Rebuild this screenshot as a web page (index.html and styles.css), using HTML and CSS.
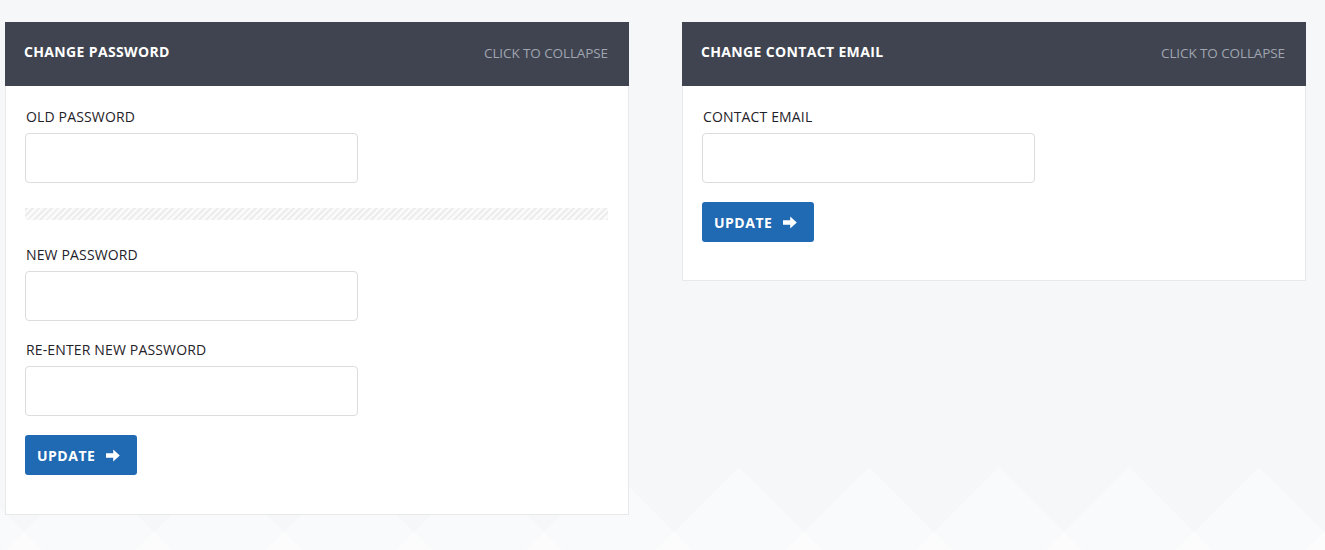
FILE: index.html
```html
<!DOCTYPE html>
<html>
<head>
<meta charset="utf-8">
<link rel="stylesheet" href="styles.css">
</head>
<body>
<div class="page">
  <section class="panel">
    <header class="panel-head">
      <h2 class="panel-title">CHANGE PASSWORD</h2>
      <span class="collapse">CLICK TO COLLAPSE</span>
    </header>
    <div class="panel-body">
      <div class="field">
        <label class="label">OLD PASSWORD</label>
        <input class="input" type="password">
      </div>
      <div class="separator"></div>
      <div class="field field-new">
        <label class="label">NEW PASSWORD</label>
        <input class="input" type="password">
      </div>
      <div class="field field-re">
        <label class="label">RE-ENTER NEW PASSWORD</label>
        <input class="input" type="password">
      </div>
      <button class="btn" type="button">UPDATE
        <svg class="arrow" viewBox="0 0 14 13" width="14" height="13"><path d="M0 4.2h7.2V0.4L13.8 6.5 7.2 12.6V8.8H0z" fill="#fff"/></svg>
      </button>
    </div>
  </section>
  <section class="panel">
    <header class="panel-head">
      <h2 class="panel-title">CHANGE CONTACT EMAIL</h2>
      <span class="collapse">CLICK TO COLLAPSE</span>
    </header>
    <div class="panel-body panel-body-short">
      <div class="field">
        <label class="label">CONTACT EMAIL</label>
        <input class="input" type="email">
      </div>
      <button class="btn" type="button">UPDATE
        <svg class="arrow" viewBox="0 0 14 13" width="14" height="13"><path d="M0 4.2h7.2V0.4L13.8 6.5 7.2 12.6V8.8H0z" fill="#fff"/></svg>
      </button>
    </div>
  </section>
</div>
</body>
</html>
```
FILE: styles.css
```css
html {
  height: 100%;
  background-color: #f6f7f9;
  background-image: url("data:image/svg+xml,%3Csvg xmlns='http://www.w3.org/2000/svg' width='130' height='90'%3E%3Cpolygon points='0,65 65,0 130,65 130,90 0,90' fill='%23f9fafb'/%3E%3Cpolygon points='0,65 25,90 0,90' fill='%23fcfcfc'/%3E%3Cpolygon points='130,65 105,90 130,90' fill='%23fcfcfc'/%3E%3C/svg%3E");
  background-repeat: repeat-x;
  background-position: 24px 467px;
}

body {
  margin: 0;
  font-family: "Open Sans", "Liberation Sans", sans-serif;
  color: #222;
}

.page {
  display: flex;
  align-items: flex-start;
  gap: 53px;
  padding: 22px 0 0 5px;
}

.panel {
  width: 624px;
  background: #fff;
  border: 1px solid #e8e9eb;
  border-top: none;
  box-sizing: border-box;
}

.panel-head {
  height: 64px;
  margin: 0 -1px;
  background: #3f4450;
  display: flex;
  justify-content: space-between;
  align-items: flex-start;
  padding: 19px 21px 0 19px;
  box-sizing: border-box;
}

.panel-title {
  margin: 0;
  font-size: 14px;
  line-height: 22px;
  font-weight: 700;
  color: #fff;
  letter-spacing: 0.35px;
}

.collapse {
  margin-top: 1px;
  font-size: 13.5px;
  line-height: 22px;
  color: #a0a5b1;
  letter-spacing: -0.1px;
}

.panel-body {
  padding: 21px 20px 39px 19px;
}

.panel-body-short {
  padding-bottom: 38px;
}

.field {
  display: flex;
  flex-direction: column;
  align-items: flex-start;
}

.label {
  font-size: 14px;
  line-height: 20px;
  color: #1f2229;
  margin-left: 1px;
  letter-spacing: 0.15px;
}

.input {
  margin-top: 6px;
  width: 333px;
  height: 50px;
  box-sizing: border-box;
  border: 1px solid #dcdcdc;
  border-radius: 4px;
  background: #fff;
  font: inherit;
}

.separator {
  height: 12px;
  margin: 25px 0 25px;
  background: repeating-linear-gradient(-45deg, #ededed 0 2px, #fafafa 2px 4.5px);
}

.field-re {
  margin-top: 19px;
}

.btn {
  margin-top: 19px;
  width: 112px;
  height: 40px;
  padding: 0 0 0 12px;
  border: none;
  border-radius: 3px;
  background: #2069b3;
  color: #fff;
  font-family: "Open Sans", "Liberation Sans", sans-serif;
  font-weight: 700;
  font-size: 14px;
  letter-spacing: 0.5px;
  display: flex;
  align-items: center;
  gap: 11px;
}

.arrow {
  display: block;
}
```
